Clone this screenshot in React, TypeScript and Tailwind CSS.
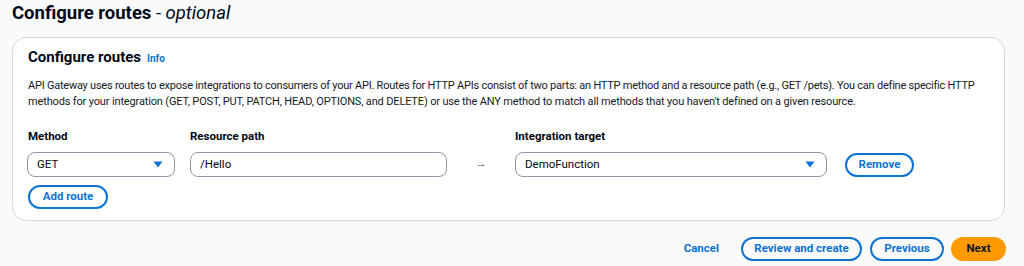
import React from "react";

const Caret = () => (
  <svg width="10" height="7" viewBox="0 0 10 7" className="shrink-0">
    <path d="M0.5 0.5 L9.5 0.5 L5 6.5 Z" fill="#0972d3" />
  </svg>
);

export default function App() {
  return (
    <div
      className="w-[1024px] h-[266px] overflow-hidden bg-[#fafafa] text-[#000716]"
      style={{ fontFamily: 'Roboto, "Noto Sans", sans-serif' }}
    >
      <div className="h-[37px] pl-[12px] pt-[1px]">
        <h1 className="text-[18.5px] leading-[24px] font-bold">
          Configure routes <span className="font-normal italic">- optional</span>
        </h1>
      </div>

      <div className="mx-[12px] w-[993px] h-[184px] bg-white border border-[#d5dbdb] rounded-[14px] pl-[15px] pr-[16px] pt-[9px]">
        <div className="flex items-baseline gap-[6px] h-[21px]">
          <h2 className="text-[15px] leading-[21px] font-bold">Configure routes</h2>
          <span className="text-[10px] font-bold text-[#0972d3]">Info</span>
        </div>
        <p className="mt-[10px] text-[11px] leading-[16px] text-[#16191f] whitespace-nowrap">
          <span className="tracking-[-0.23px]">
            API Gateway uses routes to expose integrations to consumers of your API. Routes for HTTP APIs consist of two parts: an HTTP method and a resource path (e.g., GET /pets). You can define specific HTTP
          </span>
          <br />
          <span className="tracking-[-0.15px]">
            methods for your integration (GET, POST, PUT, PATCH, HEAD, OPTIONS, and DELETE) or use the ANY method to match all methods that you haven't defined on a given resource.
          </span>
        </p>

        <div className="mt-[18px] flex text-[11.5px] leading-[16px] font-bold">
          <div className="w-[162px]">Method</div>
          <div className="w-[325px]">Resource path</div>
          <div>Integration target</div>
        </div>

        <div className="mt-[8px] flex items-center text-[11.5px]">
          <div className="ml-[-1px] w-[148px] h-[25px] border border-[#8d99a8] rounded-[8px] flex items-center justify-between pl-[9px] pr-[11px]">
            <span>GET</span>
            <Caret />
          </div>
          <div className="ml-[15px] w-[257px] h-[25px] border border-[#8d99a8] rounded-[8px] flex items-center pl-[9px]">
            /Hello
          </div>
          <div className="w-[68px] flex justify-center text-[11px] text-[#414d5c]">→</div>
          <div className="w-[312px] h-[25px] border border-[#8d99a8] rounded-[8px] flex items-center justify-between pl-[9px] pr-[11px]">
            <span>DemoFunction</span>
            <Caret />
          </div>
          <button className="ml-[18px] w-[69px] h-[24px] border-2 border-[#0972d3] rounded-full text-[#0972d3] font-bold text-[11.5px] flex items-center justify-center">
            Remove
          </button>
        </div>

        <button className="mt-[8px] w-[80px] h-[24px] border-2 border-[#0972d3] rounded-full text-[#0972d3] font-bold text-[11.5px] flex items-center justify-center">
          Add route
        </button>
      </div>

      <div className="mt-[16px] pr-[18px] flex justify-end items-center text-[11.5px] font-bold">
        <span className="text-[#0972d3] mr-[22px]">Cancel</span>
        <button className="w-[121px] h-[24px] border-2 border-[#0972d3] rounded-full text-[#0972d3] flex items-center justify-center">
          Review and create
        </button>
        <button className="ml-[8px] w-[74px] h-[24px] border-2 border-[#0972d3] rounded-full text-[#0972d3] flex items-center justify-center">
          Previous
        </button>
        <button className="ml-[7px] w-[55px] h-[24px] bg-[#ff9900] rounded-full text-[#0f141a] flex items-center justify-center">
          Next
        </button>
      </div>
    </div>
  );
}
